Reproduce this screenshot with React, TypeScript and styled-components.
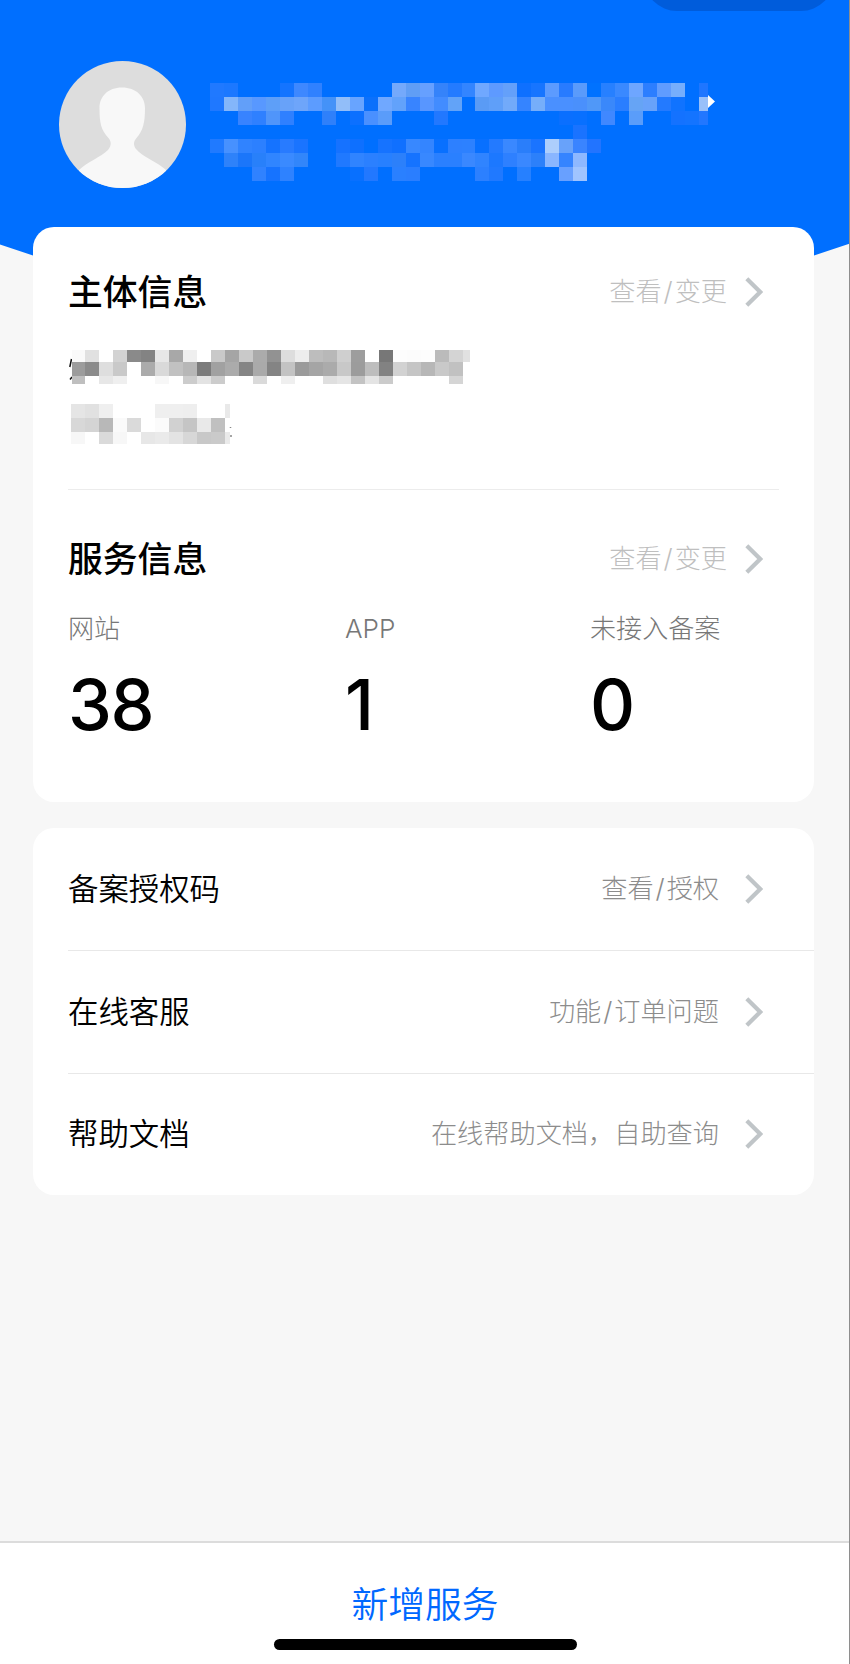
import React from "react";
import styled, { createGlobalStyle } from "styled-components";

const GlobalStyle = createGlobalStyle`
  *, *::before, *::after { box-sizing: border-box; }
  body {
    margin: 0;
    background: #f7f7f7;
    font-family: Inter, "Noto Sans CJK SC", sans-serif;
    color: #000;
  }
`;

const Page = styled.div`
  display: flex;
  flex-direction: column;
  width: 850px;
  height: 1664px;
  background: #f7f7f7;
  position: relative;
  overflow: hidden;
  &::after {
    content: "";
    position: absolute;
    top: 0;
    right: 0;
    width: 1px;
    height: 100%;
    background: #8e8e8e;
  }
`;

const Header = styled.header`
  flex: none;
  display: flex;
  align-items: flex-start;
  gap: 23px;
  height: 256px;
  padding: 61px 0 0 59px;
  background: #006fff;
  clip-path: polygon(0 0, 100% 0, 100% 243.5px, 814px 255.5px, 33px 255.5px, 0 244.5px);
`;

const MenuCapsule = styled.div`
  position: absolute;
  top: -55px;
  left: 644px;
  width: 190px;
  height: 66px;
  border-radius: 33px;
  background: #005cdb;
`;

const Avatar = styled.svg`
  display: block;
  width: 127px;
  height: 127px;
`;

const Profile = styled.div`
  padding-top: 22px;
  margin-left: 1px;
`;

const Mosaic = styled.svg`
  display: block;
`;

const Card = styled.section<{ $overlap?: boolean }>`
  flex: none;
  width: 781px;
  margin-left: 33px;
  margin-top: ${(p) => (p.$overlap ? "-29px" : "26px")};
  border-radius: 21px;
  background: #fff;
  position: relative;
  overflow: hidden;
`;

const Block = styled.div<{ $height: number; $top: number }>`
  height: ${(p) => p.$height}px;
  margin: 0 35px;
  padding-top: ${(p) => p.$top}px;
  & + & {
    border-top: 1px solid #ececec;
  }
`;

const BlockHead = styled.div`
  display: flex;
  align-items: center;
  justify-content: space-between;
  height: 40px;
  padding-right: 16px;
`;

const Title = styled.h2`
  margin: 0;
  font-size: 34.8px;
  line-height: 40px;
  font-weight: 500;
`;

const Link = styled.span<{ $tone: string; $gap: number }>`
  display: flex;
  align-items: center;
  gap: ${(p) => p.$gap}px;
  font-size: 26.2px;
  line-height: 40px;
  font-weight: 300;
  color: ${(p) => p.$tone};
`;

const Slash = styled.span`
  display: inline-block;
  width: 13px;
  text-align: center;
`;

const ChevronIcon = styled.svg`
  display: block;
  width: 18px;
  height: 30px;
`;

const Company = styled.div`
  display: flex;
  flex-direction: column;
  gap: 20px;
  padding-top: 38px;
`;

const Stats = styled.div`
  display: grid;
  grid-template-columns: 277px 245px 1fr;
  padding-top: 30px;
`;

const StatLabel = styled.div`
  font-size: 26.1px;
  line-height: 40px;
  font-weight: 300;
  color: #777;
  white-space: nowrap;
`;

const StatValue = styled.div`
  margin-top: 16px;
  font-size: 70px;
  line-height: 80px;
  font-weight: 500;
  letter-spacing: -1.4px;
`;

const Row = styled.div`
  display: flex;
  align-items: center;
  justify-content: space-between;
  height: 122.4px;
  margin-left: 35px;
  padding-right: 51px;
  & + & {
    border-top: 1.5px solid #e8e8e8;
  }
`;

const RowLabel = styled.span`
  font-size: 30.4px;
  line-height: 40px;
  font-weight: 350;
`;

const Footer = styled.footer`
  flex: none;
  display: flex;
  flex-direction: column;
  align-items: center;
  height: 123px;
  margin-top: auto;
  padding-top: 40px;
  border-top: 2px solid #dcdcdc;
  background: #fff;
`;

const AddButton = styled.button`
  padding: 0;
  border: 0;
  background: none;
  font: 350 36.8px/44px Inter, "Noto Sans CJK SC", sans-serif;
  color: #0068ff;
`;

const HomeIndicator = styled.div`
  width: 303px;
  height: 11px;
  margin-top: 12px;
  border-radius: 6px;
  background: #000;
`;

const Chevron = () => (
  <ChevronIcon viewBox="0 0 18 30">
    <path d="M1.8 1.8 L15.2 15 L1.8 28.2" fill="none" stroke="#c0c5c8" strokeWidth="4.2" />
  </ChevronIcon>
);

const renderHint = (text: string) =>
  text.split("/").map((part, i) => (
    <React.Fragment key={i}>
      {i > 0 && <Slash>/</Slash>}
      {part}
    </React.Fragment>
  ));

type Band = { y: number; h: number; cells: string };

// Paints bands of obscured text; "-" leaves a cell empty.
const Blocks = ({ edges, bands }: { edges: number[]; bands: Band[] }) => (
  <g shapeRendering="crispEdges">
    {bands.flatMap(({ y, h, cells }) =>
      cells.trim().split(/\s+/).map((c, i) =>
        c === "-" ? null : (
          <rect
            key={`${y}-${i}`}
            x={edges[i]}
            y={y}
            width={edges[i + 1] - edges[i]}
            height={h}
            fill={c.length === 2 ? `#${c}${c}${c}` : `#${c}`}
          />
        )
      )
    )}
  </g>
);

const span = (start: number, count: number, step = 14) =>
  Array.from({ length: count }, (_, i) => start + i * step);

const userEdges = [...span(0, 19), ...span(265, 17), 498];
const userBands: Band[] = [
  { y: 0, h: 14, cells: "2079ff 1c78ff - - - 1474ff 3e88ff 3081ff - - - - - 74a9fb 609ef5 66a0ff 3583fa 247bff 3385ff 70a8ff 5e9aff 64a0fa 0e70ff 1775ff 5c9bff 287bff 5a9bfb 0072ff 2780ff 3a89ff 6ea6ff 2c7eff 609cff 76aefc - 1f76ff" },
  { y: 14, h: 14, cells: "1f78ff 84b6fa 629ff9 5898ff 5e9ff8 68a2f9 6ea5fa 5c9cff 4492f8 92bef9 68a4ff 0b70fb 70a8ff 62a2fb 3884ff 5896ff 428cff 62a3f8 - 5a9bf5 5f9ff9 72aafa 3584ff 76aefa 4a90ff 4a90ff 4a90fc 5098f8 3a88fa 2a7eff 66a4f5 68a2fa 237aff 1073ff - 98c0fa" },
  { y: 28, h: 14, cells: "- - 3883ff 2f80ff 5095fa 2f80ff - - 2f80fa - 0c70ff 4a90ff 5a9cfa - - - 2278ff - - - - - - - - 0a6fff 0870ff - 4088ff - 5a9dfa - - 1472ff 1474ff 2277ff" },
  { y: 42, h: 14, cells: "- - - - - - - - - - - - - - - - - - - - - - - - - - 1a73ff" },
  { y: 56, h: 14, cells: "207aff 4791ff 3083ff 2c80ff 1573ff 287bff 1a74ff - - 1672ff 0e70ff - 1673ff 1070ff 3888ff 3485ff 0870ff 2d80ff 2d81ff 0870ff 237aff 3a88ff 2a7efa 1a74ff adcefc 68a2fa 3a84ff 2274ff" },
  { y: 70, h: 14, cells: "- 2e82fa 1b76fa 2880fa 3085ff 3a8aff 3286fa - - 2079ff 3084ff 2b80ff 2780ff 2c80fa 1573ff 3888ff 2a80ff 2a80ff 3a88ff 3084ff 1c78ff 2e80ff 3a88ff 2c80fa 8ab6ff 3584ff 8eb8ff" },
  { y: 84, h: 14, cells: "- - - 3082ff 1673ff 2e82ff - - - - 0870ff 2278ff - 2a80ff 2a7eff - - - - 2c80ff 2079ff - 2680ff - - 68a0ff a0c4ff" },
];

const nameEdges = [4, ...span(17, 28), 402];
const nameBands: Band[] = [
  { y: 0, h: 12, cells: "fa e1 - d3 8a 83 e7 a8 ef - c9 a5 c9 ab 92 dd ed bd b8 cf 9d - 77 fd fc fd bb d4 e1" },
  { y: 12, h: 14, cells: "9c 8b de c9 - ab d9 c1 b7 7c a1 ab 85 aa 84 c3 9b a5 ab c8 9c bd 82 d2 c5 b7 c9 c1" },
  { y: 26, h: 8, cells: "bf - e7 ef - - f7 - cc e3 cc - - da - ef - - df e5 c3 e4 cb - - - - d5" },
];

const codeEdges = [...span(3, 12), 162];
const codeBands: Band[] = [
  { y: 0, h: 14, cells: "e5 e1 ef - - - ef ef ee - - e9" },
  { y: 14, h: 14, cells: "d8 d4 b8 fa da - fb d1 c5 e9 c0 -" },
  { y: 28, h: 12, cells: "f7 - da f7 - e7 ea e3 d7 c8 ca ea" },
];

const stats = [
  { label: "网站", value: "38" },
  { label: "APP", value: "1" },
  { label: "未接入备案", value: "0" },
];

const entries = [
  { label: "备案授权码", hint: "查看/授权" },
  { label: "在线客服", hint: "功能/订单问题" },
  { label: "帮助文档", hint: "在线帮助文档，自助查询" },
];

export default function App() {
  return (
    <Page>
      <GlobalStyle />
      <Header>
        <MenuCapsule />
        <Avatar viewBox="0 0 127 127">
          <defs>
            <clipPath id="avatar-round">
              <circle cx="63.5" cy="63.5" r="63.5" />
            </clipPath>
          </defs>
          <g clipPath="url(#avatar-round)">
            <rect width="127" height="127" fill="#ddd" />
            <path
              d="M63 26.5C49 26.5 40.5 35.5 40.5 47C40.5 62 42 69 49.5 77C52.5 80.5 52.5 85 49 89C42 96 28 101 20 109V128H107V109C99 101 83 96 77 88C74 84 74.500 80.500 77.500 77C84 69.500 86 62 86 47C86 35.500 77 26.500 63 26.500Z"
              fill="#f8f8f8"
            />
          </g>
        </Avatar>
        <Profile>
          <Mosaic width="506" height="98" viewBox="0 0 506 98">
            <Blocks edges={userEdges} bands={userBands} />
            <path d="M498 12L505 18.500L498 25Z" fill="#fff" />
          </Mosaic>
        </Profile>
      </Header>

      <Card $overlap>
        <Block $height={262} $top={45}>
          <BlockHead>
            <Title>主体信息</Title>
            <Link $tone="#bfbfbf" $gap={18}>
              <span>{renderHint("查看/变更")}</span>
              <Chevron />
            </Link>
          </BlockHead>
          <Company>
            <Mosaic width="404" height="34" viewBox="0 0 404 34">
              <path d="M3.500 9L1.800 17M4 27L2 29.500" stroke="#111" strokeWidth="1.500" />
              <Blocks edges={nameEdges} bands={nameBands} />
            </Mosaic>
            <Mosaic width="166" height="40" viewBox="0 0 166 40">
              <Blocks edges={codeEdges} bands={codeBands} />
              <path d="M162.500 23V24M162 32H164" stroke="#888" strokeWidth="1.500" />
            </Mosaic>
          </Company>
        </Block>
        <Block $height={313} $top={49}>
          <BlockHead>
            <Title>服务信息</Title>
            <Link $tone="#bfbfbf" $gap={18}>
              <span>{renderHint("查看/变更")}</span>
              <Chevron />
            </Link>
          </BlockHead>
          <Stats>
            {stats.map((s) => (
              <div key={s.label}>
                <StatLabel>{s.label}</StatLabel>
                <StatValue>{s.value}</StatValue>
              </div>
            ))}
          </Stats>
        </Block>
      </Card>

      <Card>
        {entries.map((e) => (
          <Row key={e.label}>
            <RowLabel>{e.label}</RowLabel>
            <Link $tone="#8c8c8c" $gap={26}>
              <span>{renderHint(e.hint)}</span>
              <Chevron />
            </Link>
          </Row>
        ))}
      </Card>

      <Footer>
        <AddButton>新增服务</AddButton>
        <HomeIndicator />
      </Footer>
    </Page>
  );
}
